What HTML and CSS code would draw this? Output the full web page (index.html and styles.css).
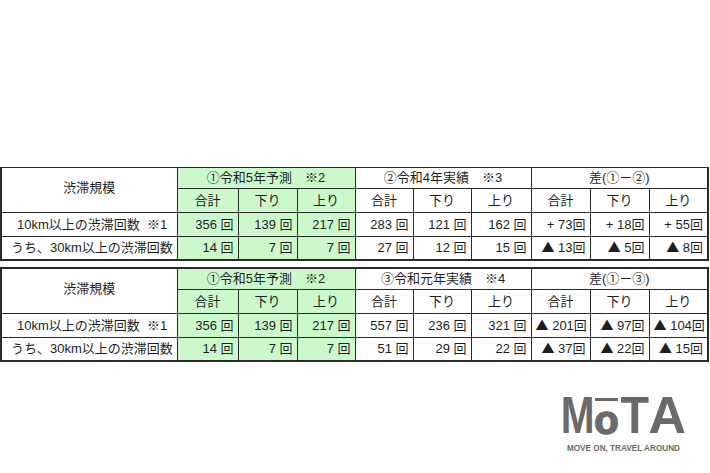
FILE: index.html
```html
<!DOCTYPE html>
<html lang="ja">
<head>
<meta charset="utf-8">
<link rel="stylesheet" href="styles.css">
</head>
<body>
<div class="page">
  <table class="tbl first">
    <colgroup>
      <col class="c-label"><col class="c61"><col class="c59"><col class="c58"><col class="c58"><col class="c58"><col class="c60"><col class="c59"><col class="c59"><col class="c59">
    </colgroup>
    <tr class="h1">
      <th rowspan="2" class="label-h">渋滞規模</th>
      <th colspan="3" class="g">①令和5年予測　※2</th>
      <th colspan="3">②令和4年実績　※3</th>
      <th colspan="3">差(①－②)</th>
    </tr>
    <tr class="h2">
      <th class="g">合計</th><th class="g">下り</th><th class="g">上り</th>
      <th>合計</th><th>下り</th><th>上り</th>
      <th>合計</th><th>下り</th><th>上り</th>
    </tr>
    <tr class="d">
      <td class="lab r1">10km以上の渋滞回数  ※1</td>
      <td class="g n">356 回</td><td class="g n">139 回</td><td class="g n">217 回</td>
      <td class="n">283 回</td><td class="n">121 回</td><td class="n">162 回</td>
      <td class="n df">+ 73回</td><td class="n df">+ 18回</td><td class="n df">+ 55回</td>
    </tr>
    <tr class="d last">
      <td class="lab r2">うち、30km以上の渋滞回数</td>
      <td class="g n">14 回</td><td class="g n">7 回</td><td class="g n">7 回</td>
      <td class="n">27 回</td><td class="n">12 回</td><td class="n">15 回</td>
      <td class="n df"><span class="tri">▲</span> 13回</td><td class="n df"><span class="tri">▲</span> 5回</td><td class="n df"><span class="tri">▲</span> 8回</td>
    </tr>
  </table>

  <table class="tbl second">
    <colgroup>
      <col class="c-label"><col class="c61"><col class="c59"><col class="c58"><col class="c58"><col class="c58"><col class="c60"><col class="c59"><col class="c59"><col class="c59">
    </colgroup>
    <tr class="h1">
      <th rowspan="2" class="label-h">渋滞規模</th>
      <th colspan="3" class="g">①令和5年予測　※2</th>
      <th colspan="3">③令和元年実績　※4</th>
      <th colspan="3">差(①－③)</th>
    </tr>
    <tr class="h2">
      <th class="g">合計</th><th class="g">下り</th><th class="g">上り</th>
      <th>合計</th><th>下り</th><th>上り</th>
      <th>合計</th><th>下り</th><th>上り</th>
    </tr>
    <tr class="d">
      <td class="lab r1">10km以上の渋滞回数  ※1</td>
      <td class="g n">356 回</td><td class="g n">139 回</td><td class="g n">217 回</td>
      <td class="n">557 回</td><td class="n">236 回</td><td class="n">321 回</td>
      <td class="n df"><span class="tri">▲</span> 201回</td><td class="n df"><span class="tri">▲</span> 97回</td><td class="n df"><span class="tri">▲</span> 104回</td>
    </tr>
    <tr class="d last">
      <td class="lab r2">うち、30km以上の渋滞回数</td>
      <td class="g n">14 回</td><td class="g n">7 回</td><td class="g n">7 回</td>
      <td class="n">51 回</td><td class="n">29 回</td><td class="n">22 回</td>
      <td class="n df"><span class="tri">▲</span> 37回</td><td class="n df"><span class="tri">▲</span> 22回</td><td class="n df"><span class="tri">▲</span> 15回</td>
    </tr>
  </table>

  <div class="logo-row">
    <div class="logo">
      <div class="mark"><span class="m">M</span><span class="o">o</span><span class="t">T</span><span class="a">A</span></div>
      <div class="tag">MOVE ON, TRAVEL AROUND</div>
    </div>
  </div>
</div>
</body>
</html>
```

FILE: styles.css
```css
html, body {
  margin: 0;
  padding: 0;
  background: #ffffff;
}

.page {
  width: 710px;
  height: 473px;
  padding-top: 167px;
  box-sizing: border-box;
  font-family: "Liberation Sans", "Noto Sans CJK JP", sans-serif;
  color: #1e1e1e;
}

.tbl {
  border-collapse: collapse;
  table-layout: fixed;
  width: 707px;
  font-size: 13px;
  border: 2px solid #2a2a2a;
}

.tbl.first {
  border-top: none;
}

.tbl.second {
  margin-top: 6px;
}

.c-label { width: 176px; }
.c61 { width: 61px; }
.c60 { width: 60px; }
.c59 { width: 59px; }
.c58 { width: 58px; }

.tbl th,
.tbl td {
  border: 1px solid #2a2a2a;
  padding: 0 4px;
  font-weight: normal;
  white-space: pre;
  overflow: hidden;
  line-height: 16px;
}

.tbl th {
  text-align: center;
}

.tbl .h1 { height: 21px; }
.tbl.second .h1 { height: 22px; }
.tbl .h2 { height: 24px; }
.tbl .d { height: 24px; }
.tbl .d.last { height: 23px; }

.tbl .label-h {
  padding-bottom: 4px;
}

.g {
  background: #ccf9cc;
}

.n {
  text-align: right;
}

.df {
  padding-right: 5px;
}

.tri {
  font-family: "Noto Sans CJK JP", sans-serif;
  font-size: 13px;
}

.lab.r1 {
  text-align: left;
  padding-left: 15px;
}

.lab.r2 {
  text-align: left;
  padding-left: 9px;
}

.logo-row {
  display: flex;
  justify-content: flex-end;
  padding-right: 24px;
  margin-top: 33px;
}

.logo {
  display: flex;
  flex-direction: column;
  align-items: center;
  color: #6a6a6a;
}

.mark {
  display: flex;
  align-items: flex-end;
  font-family: "Liberation Sans", sans-serif;
  font-weight: bold;
  font-size: 52px;
  line-height: 40px;
  height: 40px;
}

.mark span {
  display: block;
}

.mark .m {
  transform: scaleX(0.78);
  margin: 0 -5px 0 -5px;
}

.mark .o {
  position: relative;
  font-size: 40px;
  line-height: 30px;
  margin-right: 2px;
  -webkit-text-stroke: 1.5px #6a6a6a;
}

.mark .o::before {
  content: "";
  position: absolute;
  left: 1px;
  right: 1px;
  top: -7px;
  height: 3px;
  background: #6a6a6a;
}

.mark .t {
  transform: scaleX(0.9);
  margin: 0 -2px;
}

.tag {
  margin-top: 9px;
  font-family: "Liberation Sans", sans-serif;
  font-weight: bold;
  font-size: 8.2px;
  white-space: nowrap;
}
```
